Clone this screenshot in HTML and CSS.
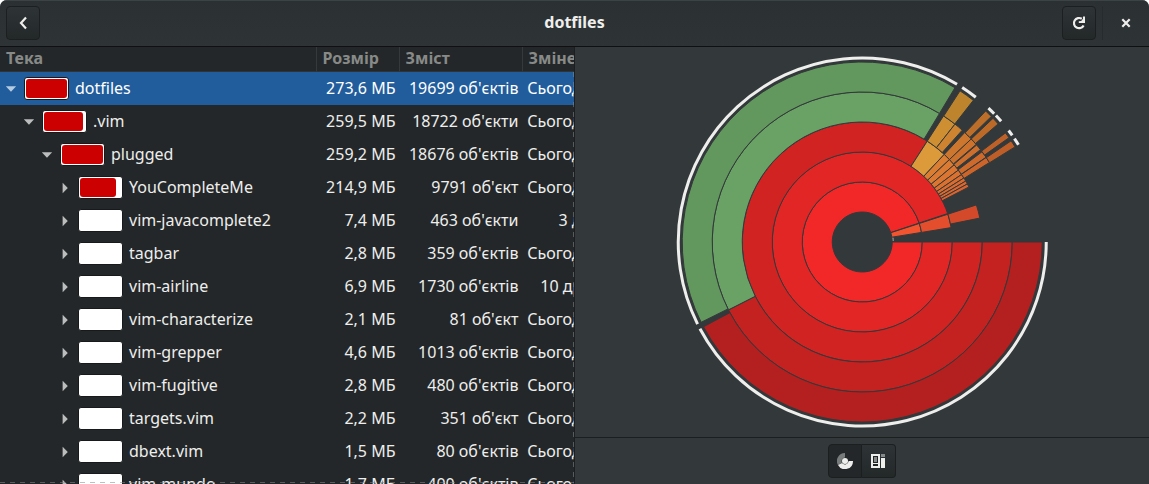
FILE: index.html
```
<!DOCTYPE html>
<html lang="uk">
<head>
<meta charset="utf-8">
<title>dotfiles</title>
<link rel="stylesheet" href="styles.css">
</head>
<body>
<div class="window">
  <header class="titlebar">
    <button class="btn" type="button" aria-label="Назад">
      <svg class="icon" viewBox="0 0 16 16"><path d="M11 2.600 6 8l5 5.400" fill="none" stroke="currentColor" stroke-width="2.200"/></svg>
    </button>
    <h1 class="title">dotfiles</h1>
    <div class="actions">
      <button class="btn" type="button" aria-label="Оновити">
        <svg class="icon" viewBox="0 0 16 16"><path d="M12.600 10.400A5.100 5.100 0 1 1 10.800 3.800" fill="none" stroke="currentColor" stroke-width="2.200"/><path d="M14 1.500V8H7.800V6.200l2.400-.2L12 3.800V1.500z" fill="currentColor"/></svg>
      </button>
      <span class="divider"></span>
      <button class="btn flat" type="button" aria-label="Закрити">
        <svg class="icon" viewBox="0 0 16 16"><path d="M4.300 4.300 11.700 11.700M11.700 4.300 4.300 11.700" fill="none" stroke="currentColor" stroke-width="2.200"/></svg>
      </button>
    </div>
  </header>
  <main class="panes">
    <section class="tree">
      <table class="files">
        <colgroup><col><col class="c-size"><col class="c-items"><col class="c-date"></colgroup>
        <thead><tr><th>Тека</th><th>Розмір</th><th>Зміст</th><th>Змінено</th></tr></thead>
        <tbody id="rows"></tbody>
      </table>
    </section>
    <section class="chart-pane">
      <div class="chart"><svg id="rings" viewBox="-186 -186 372 372" role="img" aria-label="Діаграма кілець"></svg></div>
      <footer class="switcher">
        <div class="linked">
          <button class="btn on" type="button" aria-label="Діаграма кілець">
            <svg class="icon" viewBox="0 0 16 16"><path d="M8 0A8 8 0 0 0 1 12L5 9.600A3.600 3.600 0 0 1 8 4.400z" fill="#777b7c"/><path d="M1 12A8 8 0 0 0 16 8H11.700A3.800 3.800 0 0 1 5 10z" fill="currentColor"/><circle cx="8" cy="8" r="3" fill="currentColor"/></svg>
          </button>
          <button class="btn" type="button" aria-label="Деревоподібна карта">
            <svg class="icon" viewBox="0 0 16 16"><path d="M1 1h9v14H1z" fill="currentColor"/><path d="M3 3h5v7H3zM3 11h5v2H3z" fill="#202425"/><path d="M4 4h3v5H4zM11 1h4v3h-4z" fill="#85898a"/><path d="M11 5h4v10h-4z" fill="currentColor"/></svg>
          </button>
        </div>
      </footer>
    </section>
  </main>
</div>
<script src="app.js"></script>
</body>
</html>
```

FILE: styles.css
```
* { box-sizing: border-box; }
body {
  margin: 0;
  background: #fff;
  color: #eeeeec;
  font: 16px/24px "Noto Sans", sans-serif;
}
.window {
  display: flex;
  flex-direction: column;
  height: 100vh;
  overflow: hidden;
  border-radius: 7px 7px 0 0;
  background: #33393b;
}
.titlebar {
  display: grid;
  grid-template-columns: 1fr auto 1fr;
  align-items: center;
  padding: 5px 6px 6px;
  border-top: 1px solid #3c4345;
  border-bottom: 1px solid #0e1011;
  background: linear-gradient(#2b3032, #2e3436);
}
.title { margin: 0; padding-bottom: 2px; font-size: 16px; line-height: 24px; font-weight: 700; }
.actions { display: flex; justify-content: flex-end; gap: 6px; }
.divider { width: 1px; background: #262b2c; }
.btn {
  display: flex;
  align-items: center;
  justify-content: center;
  width: 34px;
  height: 34px;
  padding: 0;
  border: 1px solid #1c1f1f;
  border-radius: 4px;
  color: #eeeeec;
  background: linear-gradient(#2e3436, #232829);
}
.btn.flat { border-color: transparent; background: none; }
.btn.on { background: #232729; }
.icon { width: 16px; height: 16px; }
.panes { display: flex; flex: 1; min-height: 0; }
.tree {
  position: relative;
  width: 50%;
  overflow: hidden;
  border-right: 1px solid #1c1f1f;
  background: #232729;
}
.tree::after {
  content: "";
  position: absolute;
  inset: 25px 0 1px 0;
  background:
    repeating-linear-gradient(#8888 0 5px, transparent 5px 10px) right / 1px 100% no-repeat,
    repeating-linear-gradient(90deg, #8888 0 5px, transparent 5px 10px) bottom / 100% 1px no-repeat;
}
.files {
  width: calc(100% + 26px);
  table-layout: fixed;
  border-collapse: separate;
  border-spacing: 0;
  white-space: nowrap;
}
.c-size { width: 83px; }
.c-items { width: 123px; }
.c-date { width: 77px; }
th {
  height: 25px;
  padding: 0 5px 2px 6px;
  line-height: 22px;
  text-align: left;
  color: #888a88;
  border-right: 1px solid #35393b;
  border-bottom: 1px solid #2f3436;
}
td { height: 33px; padding: 0 4px 2px 3px; text-align: right; }
td:first-child { padding-bottom: 0; text-align: left; }
.selected { background: #215d9c; color: #fff; }
.name { display: flex; align-items: center; gap: 6px; }
.label { padding-bottom: 2px; }
.level-1 { padding-left: 18px; }
.level-2 { padding-left: 36px; }
.level-3 { padding-left: 54px; }
.expander {
  display: flex;
  width: 15px;
  height: 16px;
  padding: 0;
  border: 0;
  color: #bcbebe;
  background: none;
}
.selected .expander { color: #b5cbe2; }
.usage {
  width: 45px;
  height: 23px;
  padding: 1px;
  border: 1px solid #171a1b;
  border-radius: 3px;
  background: #fff;
}
.fill { display: block; height: 19px; border-radius: 3px; background: #c00; }
.chart-pane { display: flex; flex: 1; flex-direction: column; min-width: 0; }
.chart { display: flex; flex: 1; min-height: 0; padding: 9px; }
.chart svg { flex: 1; min-width: 0; }
.switcher {
  display: flex;
  justify-content: center;
  padding: 6px;
  border-top: 1px solid #1c1f1f;
}
.linked { display: flex; }
.linked .btn:first-child { border-radius: 4px 0 0 4px; }
.linked .btn:last-child { border-left: 0; border-radius: 0 4px 4px 0; }
```

FILE: app.js
```
// level, name, usage percent, size, items, modified
const folders = [
  [0, "dotfiles", 100, "273,6 МБ", "19699 об'єктів", "Сьогодні"],
  [1, ".vim", 95, "259,5 МБ", "18722 об'єкти", "Сьогодні"],
  [2, "plugged", 100, "259,2 МБ", "18676 об'єктів", "Сьогодні"],
  [3, "YouCompleteMe", 88, "214,9 МБ", "9791 об'єкт", "Сьогодні"],
  [3, "vim-javacomplete2", 0, "7,4 МБ", "463 об'єкти", "3 дні"],
  [3, "tagbar", 0, "2,8 МБ", "359 об'єктів", "Сьогодні"],
  [3, "vim-airline", 0, "6,9 МБ", "1730 об'єктів", "10 днів"],
  [3, "vim-characterize", 0, "2,1 МБ", "81 об'єкт", "Сьогодні"],
  [3, "vim-grepper", 0, "4,6 МБ", "1013 об'єктів", "Сьогодні"],
  [3, "vim-fugitive", 0, "2,8 МБ", "480 об'єктів", "Сьогодні"],
  [3, "targets.vim", 0, "2,2 МБ", "351 об'єкт", "Сьогодні"],
  [3, "dbext.vim", 0, "1,5 МБ", "80 об'єктів", "Сьогодні"],
  [3, "vim-mundo", 0, "1,7 МБ", "400 об'єктів", "Сьогодні"]
];
const arrows = ["M1 5h11L6.500 11z", "M4 2.500v11L9.500 8z"];
document.getElementById("rows").innerHTML = folders.map(([level, name, used, size, items, date]) => `
  <tr class="${level ? "" : "selected"}">
    <td><div class="name level-${level}">
      <button class="expander" type="button" aria-label="${name}"><svg class="icon" viewBox="-2 0 16 16"><path d="${arrows[level < 3 ? 0 : 1]}" fill="currentColor"/></svg></button>
      <span class="usage"><span class="fill" style="width:${used}%"></span></span>
      <span class="label">${name}</span>
    </div></td>
    <td>${size}</td><td>${items}</td><td>${date}</td>
  </tr>`).join("");

// ring, start angle, end angle (clockwise degrees from the right), colour
const sectors = [
  [1, 0, 341.6, "#f22828"], [1, 342, 350.8, "#f25430"],
  [2, 0, 341.6, "#e22525"], [2, 342, 350.8, "#e44e2d"],
  [3, 0, 302.8, "#d22323"], [3, 342, 348.5, "#d4492a"],
  [3, 302.8, 313.1, "#dc9a3a"],
  [3, 313.1, 316.6, "#dc7e32"], [3, 316.6, 320, "#dc7a31"], [3, 320, 323.2, "#dc7530"],
  [3, 323.2, 325.8, "#dc712f"], [3, 325.8, 327.8, "#dc6c2e"], [3, 327.8, 329.5, "#dc692e"],
  [3, 329.5, 331.1, "#dc662d"], [3, 331.1, 332.7, "#dc632d"],
  [4, 0, 153.1, "#c42121"], [4, 153.1, 301, "#6aa266"],
  [4, 302.8, 308.2, "#cd8f32"], [4, 308.2, 311.8, "#cd832f"],
  [4, 313.1, 316.6, "#cd762d"], [4, 316.6, 319.4, "#cd722c"], [4, 319.7, 322, "#cd6e2c"],
  [4, 323, 325.6, "#cd692b"], [4, 325.7, 328, "#cd652b"],
  [5, 0, 151.9, "#b41f1f"], [5, 153.5, 301, "#62975d"],
  [5, 302.9, 308.1, "#bd842d"],
  [5, 313.3, 315.8, "#bd6e29"], [5, 316.6, 319, "#bd6a29"],
  [5, 322.7, 324.6, "#bd6128"], [5, 325.8, 328.1, "#bd5d28"]
];
const point = (r, deg) => {
  const a = deg * Math.PI / 180;
  return `${(r * Math.cos(a)).toFixed(2)} ${(r * Math.sin(a)).toFixed(2)}`;
};
const arc = (r, from, to) => `M${point(r, from)}A${r} ${r} 0 ${to - from > 180 ? 1 : 0} 1 ${point(r, to)}`;
let shapes = "";
for (const [ring, from, to, color] of sectors) {
  const inner = ring * 30, outer = inner + 30;
  shapes += `<path d="${arc(outer, from, to)}L${point(inner, to)}A${inner} ${inner} 0 ${to - from > 180 ? 1 : 0} 0 ${point(inner, from)}Z" fill="${color}" stroke="#33393b"/>`;
  if (ring === 5) shapes += `<path d="${arc(184, from, to)}" fill="none" stroke="#eeeeec" stroke-width="3"/>`;
}
shapes += `<path d="${arc(31, 352, 358)}" fill="none" stroke="#aeb0af" stroke-width="1"/>`;
document.getElementById("rings").innerHTML = shapes;
```
